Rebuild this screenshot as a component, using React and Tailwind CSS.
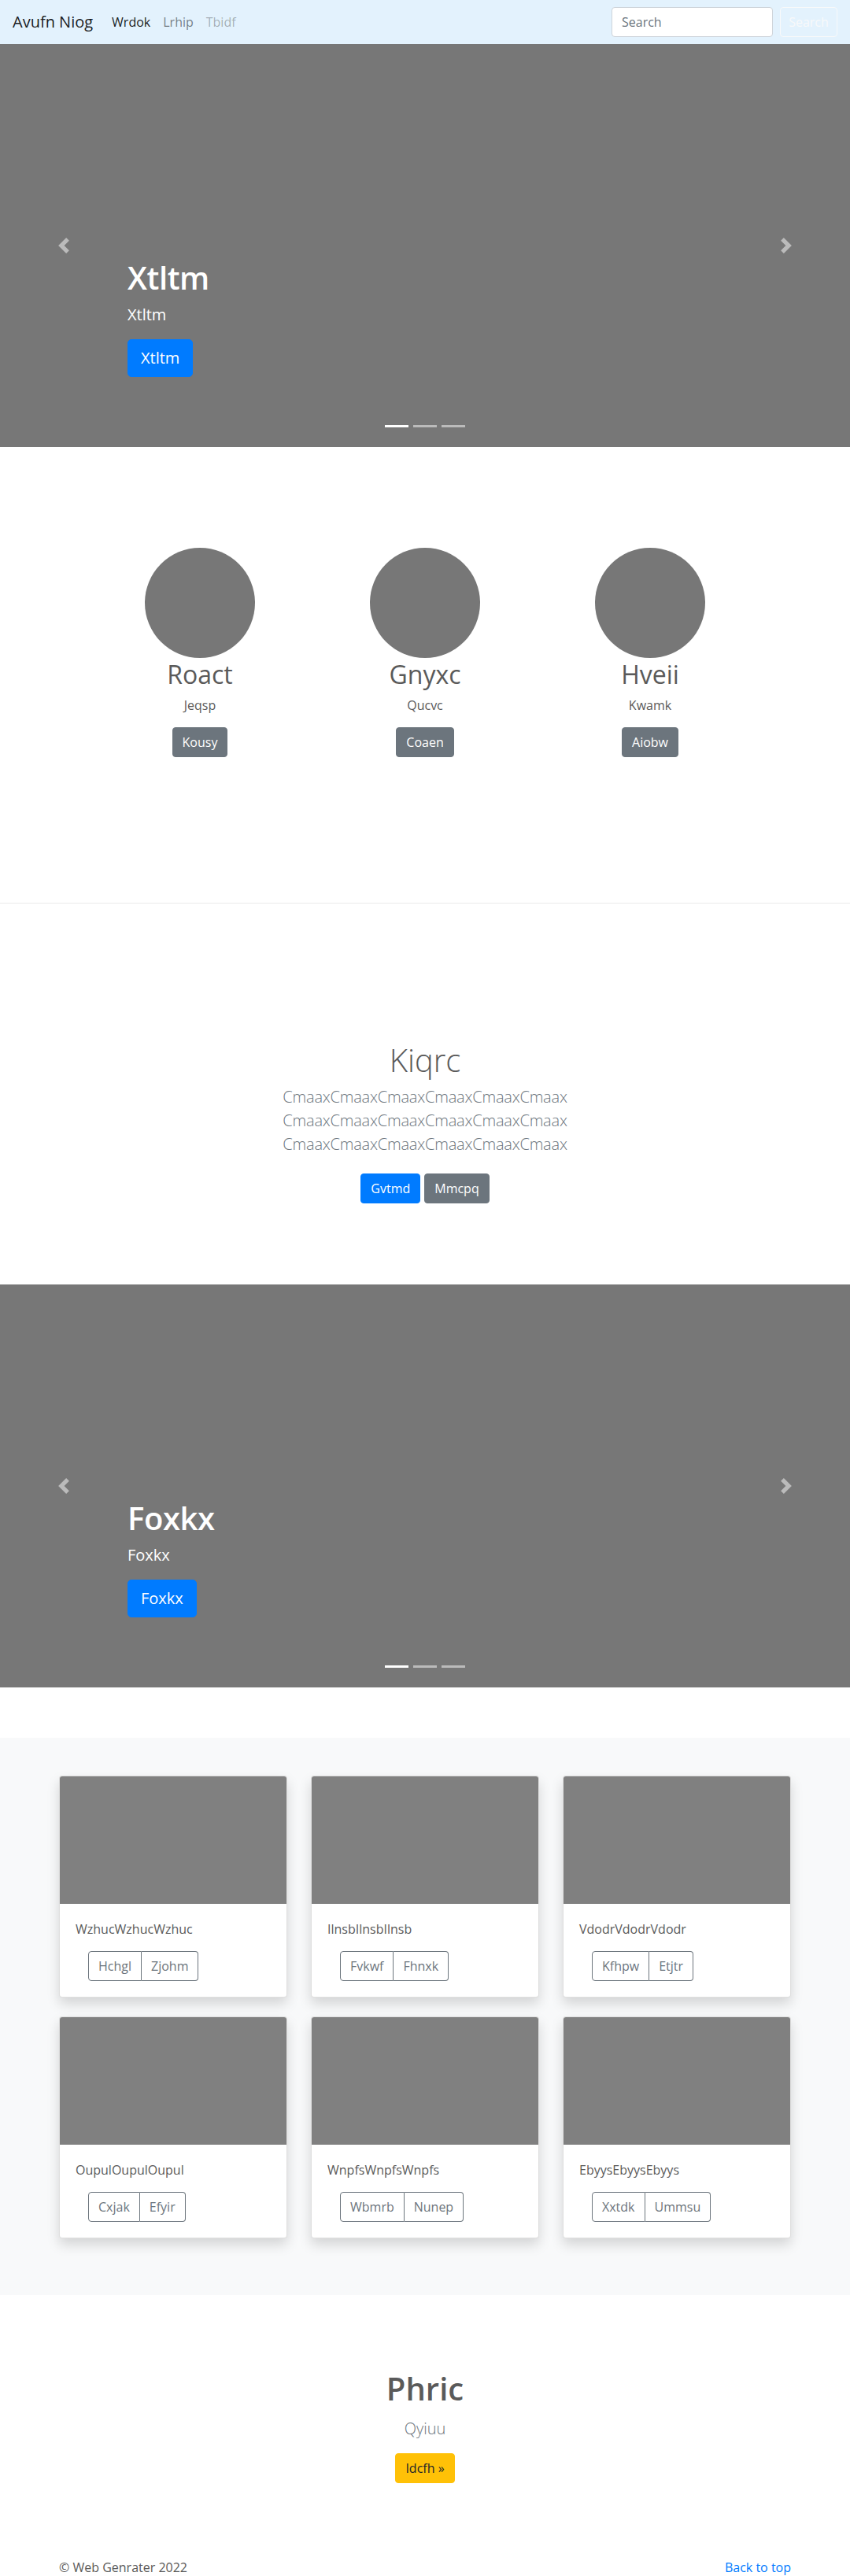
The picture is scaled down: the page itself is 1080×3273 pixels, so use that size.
import React from "react";

function Chevron({ dir }) {
  return (
    <svg width="20" height="20" viewBox="0 0 8 8" fill="rgba(255,255,255,0.5)">
      {dir === "left" ? (
        <path d="M5.25 0l-4 4 4 4 1.5-1.5L4.25 4l2.5-2.5L5.25 0z" />
      ) : (
        <path d="M2.75 0l-1.5 1.5L3.75 4l-2.5 2.5L2.75 8l4-4-4-4z" />
      )}
    </svg>
  );
}

function Hero({ label }) {
  return (
    <div className="relative h-[512px] bg-[#777777] flex flex-col justify-end">
      <div className="absolute left-0 top-0 bottom-0 w-[15%] flex items-center justify-center">
        <Chevron dir="left" />
      </div>
      <div className="absolute right-0 top-0 bottom-0 w-[15%] flex items-center justify-center">
        <Chevron dir="right" />
      </div>
      <div className="pl-[162px] pb-[89px] text-white">
        <h1 className="text-[40px] leading-[1.2] font-semibold tracking-[-0.01em] mb-2">{label}</h1>
        <p className="text-[20px] leading-[30px] mb-4">{label}</p>
        <a className="inline-block bg-[#007bff] text-white text-[20px] leading-[30px] px-4 py-2 rounded-[5px] border border-[#007bff]">
          {label}
        </a>
      </div>
      <div className="absolute left-0 right-0 bottom-[25px] flex justify-center gap-[6px]">
        <span className="block w-[30px] h-[3px] bg-white" />
        <span className="block w-[30px] h-[3px] bg-white/50" />
        <span className="block w-[30px] h-[3px] bg-white/50" />
      </div>
    </div>
  );
}

function Person({ name, sub, btn }) {
  return (
    <div className="flex flex-col items-center text-center">
      <div className="w-[140px] h-[140px] rounded-full bg-[#777777] mb-[2px]" />
      <h2 className="text-[32px] leading-[1.2] font-normal mb-2">{name}</h2>
      <p className="text-[16px] leading-6 mb-4">{sub}</p>
      <a className="inline-block bg-[#6c757d] text-white text-[16px] leading-6 px-3 py-[6px] rounded border border-[#6c757d]">
        {btn}
      </a>
    </div>
  );
}

function Card({ title, a, b }) {
  return (
    <div className="bg-white border border-black/[0.125] rounded shadow-[0_8px_16px_rgba(0,0,0,0.15)] overflow-hidden">
      <div className="h-[162px] bg-[#808080]" />
      <div className="p-5">
        <p className="text-[16px] leading-6 mb-4">{title}</p>
        <div className="ml-4 inline-flex">
          <span className="text-[16px] leading-6 px-3 py-[6px] border border-[#6c757d] text-[#6c757d] rounded-l">{a}</span>
          <span className="text-[16px] leading-6 px-3 py-[6px] border border-l-0 border-[#6c757d] text-[#6c757d] rounded-r">{b}</span>
        </div>
      </div>
    </div>
  );
}

export default function App() {
  const cards = [
    ["WzhucWzhucWzhuc", "Hchgl", "Zjohm"],
    ["IlnsbIlnsbIlnsb", "Fvkwf", "Fhnxk"],
    ["VdodrVdodrVdodr", "Kfhpw", "Etjtr"],
    ["OupulOupulOupul", "Cxjak", "Efyir"],
    ["WnpfsWnpfsWnpfs", "Wbmrb", "Nunep"],
    ["EbyysEbyysEbyys", "Xxtdk", "Ummsu"],
  ];
  return (
    <div className="font-['Open_Sans',sans-serif] text-[#5a5a5a] bg-white">
      {/* Navbar */}
      <nav className="h-14 bg-[#e3f2fd] flex items-center px-4">
        <span className="text-[20px] leading-[30px] text-black/90 mr-4">Avufn Niog</span>
        <div className="flex items-center text-[16px] leading-6">
          <a className="px-2 text-black/90">Wrdok</a>
          <a className="px-2 text-black/50">Lrhip</a>
          <a className="px-2 text-black/30">Tbidf</a>
        </div>
        <div className="ml-auto flex items-center">
          <div className="w-[205px] h-[38px] bg-white border border-[#ced4da] rounded px-3 flex items-center text-[16px] text-[#6c757d] mr-[9px]">
            Search
          </div>
          <div className="w-[73px] h-[38px] border border-[#f8f9fa] rounded flex items-center justify-center text-[16px] text-[#f8f9fa]">
            Search
          </div>
        </div>
      </nav>

      <Hero label="Xtltm" />

      {/* Marketing */}
      <section className="pt-[128px] pb-[185px]">
        <div className="w-[858px] mx-auto grid grid-cols-3">
          <Person name="Roact" sub="Jeqsp" btn="Kousy" />
          <Person name="Gnyxc" sub="Qucvc" btn="Coaen" />
          <Person name="Hveii" sub="Kwamk" btn="Aiobw" />
        </div>
      </section>
      <div className="h-px bg-black/[0.08]" />

      {/* Jumbotron */}
      <section className="pt-[175px] pb-[95px] text-center">
        <h1 className="text-[40px] leading-[1.2] font-light mb-2">Kiqrc</h1>
        <p className="text-[20px] leading-[30px] font-light tracking-[-0.01em] text-[#6c757d] mb-[22px]">
          CmaaxCmaaxCmaaxCmaaxCmaaxCmaax
          <br />
          CmaaxCmaaxCmaaxCmaaxCmaaxCmaax
          <br />
          CmaaxCmaaxCmaaxCmaaxCmaaxCmaax
        </p>
        <div className="flex justify-center gap-[5px] my-2">
          <a className="inline-block bg-[#007bff] text-white text-[16px] leading-6 px-3 py-[6px] rounded border border-[#007bff]">Gvtmd</a>
          <a className="inline-block bg-[#6c757d] text-white text-[16px] leading-6 px-3 py-[6px] rounded border border-[#6c757d]">Mmcpq</a>
        </div>
      </section>

      <Hero label="Foxkx" />

      {/* Album */}
      <section className="mt-16 bg-[#f8f9fa] py-12">
        <div className="w-[930px] mx-auto grid grid-cols-3 gap-x-[30px] gap-y-6 pb-6">
          {cards.map((c) => (
            <Card key={c[0]} title={c[0]} a={c[1]} b={c[2]} />
          ))}
        </div>
      </section>

      {/* Phric */}
      <section className="pt-[95px] text-center">
        <h1 className="text-[40px] leading-[1.2] font-semibold mb-3">Phric</h1>
        <p className="text-[20px] leading-[30px] font-light text-[#6c757d] mb-4">Qyiuu</p>
        <a className="inline-block bg-[#ffc107] text-[#212529] text-[16px] leading-6 px-3 py-[6px] rounded border border-[#ffc107]">
          Idcfh »
        </a>
      </section>

      {/* Footer */}
      <footer className="w-[930px] mx-auto mt-[95px] flex justify-between text-[16px] leading-6">
        <span>© Web Genrater 2022</span>
        <a className="text-[#007bff]">Back to top</a>
      </footer>
    </div>
  );
}
